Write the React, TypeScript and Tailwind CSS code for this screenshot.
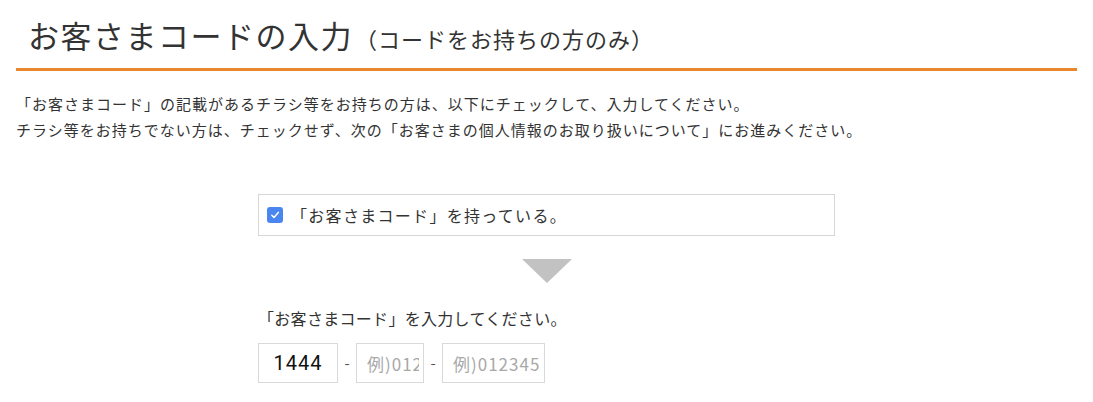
import React from "react";

export default function App() {
  const jp = "font-['Noto_Sans_CJK_JP','Noto_Sans',sans-serif]";
  return (
    <div className={`${jp} bg-white text-[#333] w-[1093px] h-[402px] overflow-hidden`}>
      <div className="mx-4">
        <h2 className="pt-[12px] pl-3 pb-[10px] border-b-[3px] border-[#e8872c] flex items-baseline">
          <span className="text-[31px] leading-[46px] font-normal tracking-[1.5px]">お客さまコードの入力</span>
          <span className="text-[22px] leading-[30px] ml-[2px] tracking-[1px]">（コードをお持ちの方のみ）</span>
        </h2>
        <div className="mt-[20px] text-[15px] leading-[26px] tracking-[1px]">
          <p>「お客さまコード」の記載があるチラシ等をお持ちの方は、以下にチェックして、入力してください。</p>
          <p>チラシ等をお持ちでない方は、チェックせず、次の「お客さまの個人情報のお取り扱いについて」にお進みください。</p>
        </div>
        <div className="mt-[51px] flex flex-col items-center">
          <div className="w-[577px]">
            <label className="flex items-center h-[42px] border border-[#d6d6d6] pl-[8px]">
              <span className="w-[16px] h-[16px] rounded-[3px] bg-[#4a86f0] flex items-center justify-center">
                <svg width="10" height="10" viewBox="0 0 10 10" fill="none">
                  <path d="M1.8 5.3 L4 7.5 L8.3 2.4" stroke="white" strokeWidth="1.5" strokeLinecap="round" strokeLinejoin="round" />
                </svg>
              </span>
              <span className="ml-[8px] text-[16px] leading-[24px] tracking-[1.3px]">「お客さまコード」を持っている。</span>
            </label>
            <div className="flex justify-center mt-[23px]">
              <div className="w-0 h-0 border-l-[25px] border-r-[25px] border-t-[24px] border-l-transparent border-r-transparent border-t-[#c2c2c2]" />
            </div>
            <p className="mt-[23px] text-[16px] leading-[24px] tracking-[0.3px]">「お客さまコード」を入力してください。</p>
            <div className="mt-[13px] flex items-center">
              <input
                readOnly
                value="1444"
                className="w-[80px] h-[40px] border border-[#d9d9d9] text-center text-[20px] font-normal text-[#111] font-['Roboto',sans-serif] tracking-[1px] outline-none"
              />
              <span className="w-[18px] text-center text-[#555] text-[15px]">-</span>
              <input
                readOnly
                placeholder="例)012345"
                className="w-[68px] h-[40px] border border-[#d9d9d9] pl-[10px] pr-[4px] text-[17px] tracking-[1px] placeholder:text-[#a8a8a8] outline-none"
              />
              <span className="w-[18px] text-center text-[#555] text-[15px]">-</span>
              <input
                readOnly
                placeholder="例)012345"
                className="w-[103px] h-[40px] border border-[#d9d9d9] pl-[10px] pr-[4px] text-[17px] tracking-[1px] placeholder:text-[#a8a8a8] outline-none"
              />
            </div>
          </div>
        </div>
      </div>
    </div>
  );
}
